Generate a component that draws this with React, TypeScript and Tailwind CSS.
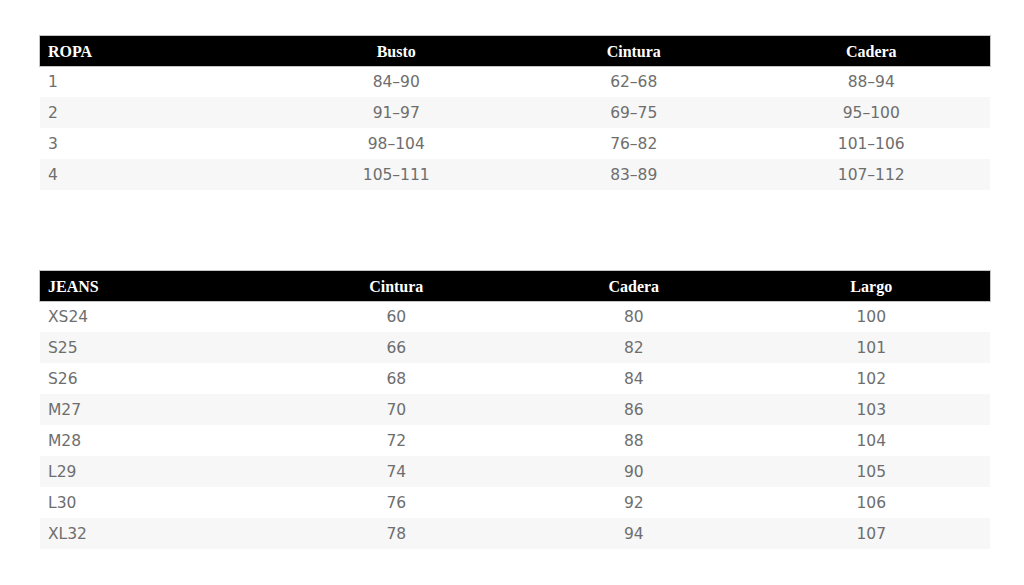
const ropa = {
  head: ["ROPA", "Busto", "Cintura", "Cadera"],
  rows: [
    ["1", "84-90", "62-68", "88-94"],
    ["2", "91-97", "69-75", "95-100"],
    ["3", "98-104", "76-82", "101-106"],
    ["4", "105-111", "83-89", "107-112"],
  ],
};

const jeans = {
  head: ["JEANS", "Cintura", "Cadera", "Largo"],
  rows: [
    ["XS24", "60", "80", "100"],
    ["S25", "66", "82", "101"],
    ["S26", "68", "84", "102"],
    ["M27", "70", "86", "103"],
    ["M28", "72", "88", "104"],
    ["L29", "74", "90", "105"],
    ["L30", "76", "92", "106"],
    ["XL32", "78", "94", "107"],
  ],
};

function SizeTable({ head, rows }: { head: string[]; rows: string[][] }) {
  return (
    <table className="w-[950px] table-fixed border-collapse">
      <thead>
        <tr className="bg-black outline outline-1 outline-[#c4c4c4]">
          {head.map((h, i) => (
            <th
              key={i}
              className={`h-[30px] px-2 pt-[1px] font-bold text-white text-[16px] font-['Liberation_Serif',serif] ${
                i === 0 ? "text-left" : "text-center"
              }`}
            >
              {h}
            </th>
          ))}
        </tr>
      </thead>
      <tbody>
        {rows.map((r, ri) => (
          <tr key={ri} className={ri % 2 === 1 ? "bg-[#f7f7f7]" : "bg-white"}>
            {r.map((c, ci) => (
              <td
                key={ci}
                className={`h-[31px] px-2 pt-[2px] text-[15.5px] text-[#6e6e6e] font-['DejaVu_Sans',sans-serif] ${
                  ci === 0 ? "text-left" : "text-center"
                }`}
              >
                {c.replace("-", "–")}
              </td>
            ))}
          </tr>
        ))}
      </tbody>
    </table>
  );
}

export default function App() {
  return (
    <div className="min-h-screen w-[1024px] bg-white pt-[36px] pl-[40px]">
      <SizeTable head={ropa.head} rows={ropa.rows} />
      <div className="h-[81px]" />
      <SizeTable head={jeans.head} rows={jeans.rows} />
    </div>
  );
}
